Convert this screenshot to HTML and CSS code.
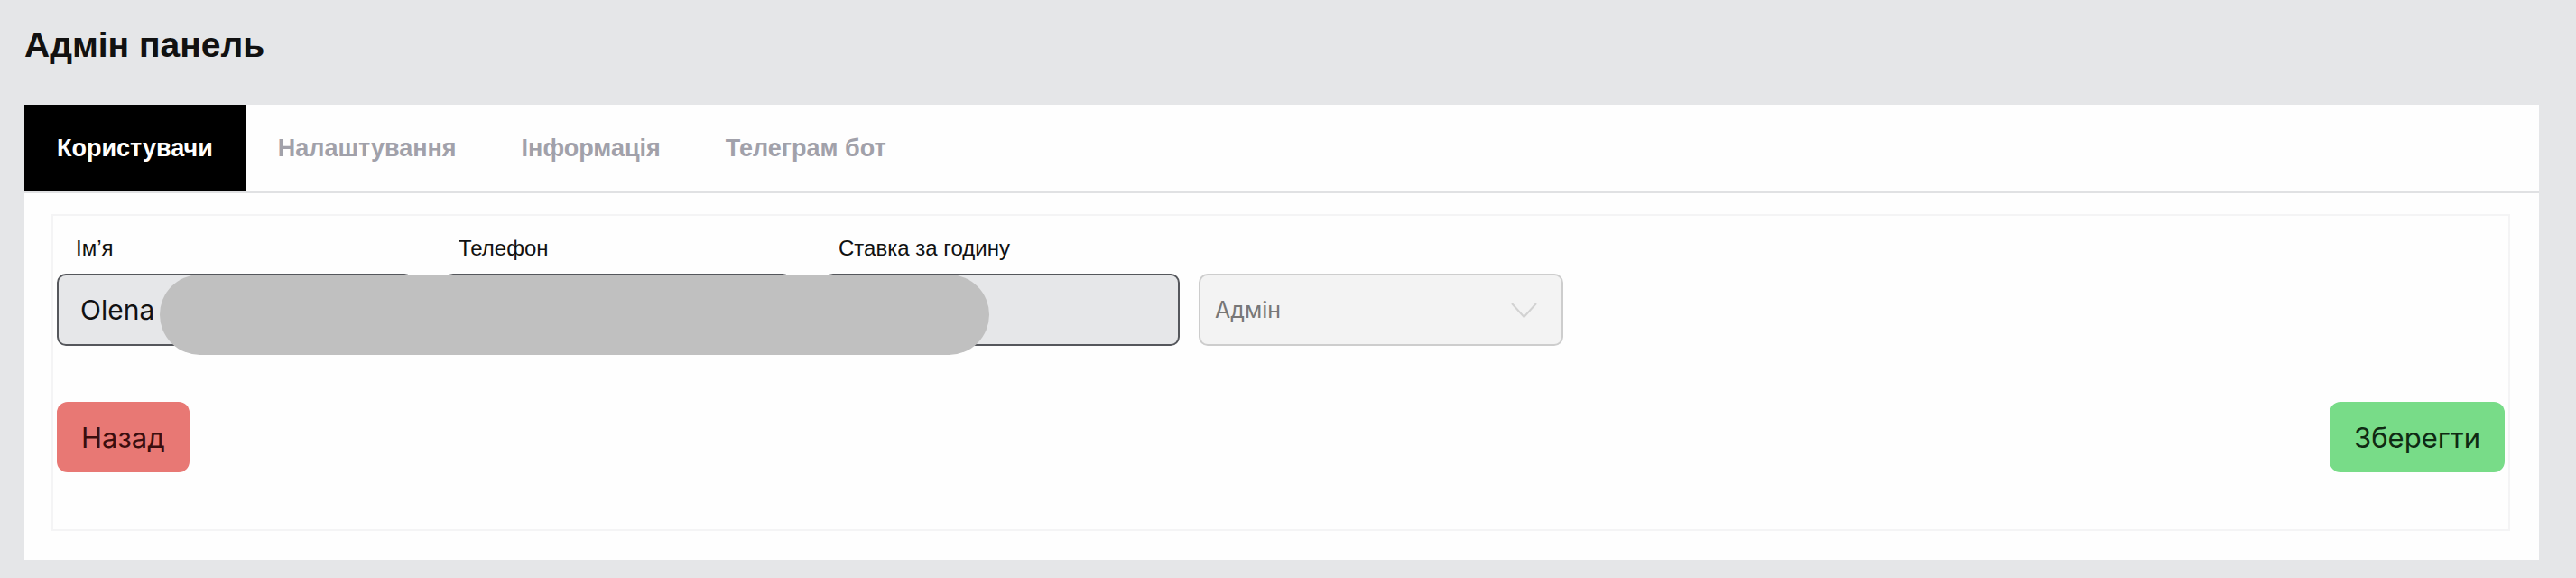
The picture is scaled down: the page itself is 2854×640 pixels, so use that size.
FILE: index.html
```html
<!DOCTYPE html>
<html lang="uk">
<head>
<meta charset="utf-8">
<title>Адмін панель</title>
<link rel="stylesheet" href="styles.css">
</head>
<body>
<div class="page">
  <h1 class="title">Адмін панель</h1>
  <section class="panel">
    <nav class="tabs">
      <div class="tab tab-active">Користувачи</div>
      <div class="tab">Налаштування</div>
      <div class="tab">Інформація</div>
      <div class="tab">Телеграм бот</div>
    </nav>
    <div class="panel-body">
      <form class="card">
        <div class="fields">
          <div class="field field-name">
            <label class="label label-first">Ім’я</label>
            <div class="input">Olena</div>
          </div>
          <div class="field field-phone">
            <label class="label">Телефон</label>
            <div class="input"></div>
          </div>
          <div class="field field-rate">
            <label class="label">Ставка за годину</label>
            <div class="input"></div>
          </div>
          <div class="field field-role">
            <div class="select">
              <span>Адмін</span>
              <svg class="chevron" width="29" height="17" viewBox="0 0 29 17"><polyline points="1,1 14.5,16 28,1" fill="none" stroke="#d2d2d2" stroke-width="2"/></svg>
            </div>
          </div>
        </div>
        <div class="actions">
          <button type="button" class="btn btn-back">Назад</button>
          <button type="button" class="btn btn-save">Зберегти</button>
        </div>
        <div class="redaction"></div>
      </form>
    </div>
  </section>
</div>
</body>
</html>
```
FILE: styles.css
```css
html, body {
  margin: 0;
  padding: 0;
  background: #e5e6e8;
}
.page {
  padding: 27px 41px 20px 27px;
  font-family: "Liberation Sans", Arial, sans-serif;
  color: #111;
}
.title {
  margin: 0 0 43px 0;
  font-size: 39px;
  line-height: 46px;
  font-weight: 700;
  color: #111;
}
.panel {
  background: #fefefe;
}
.tabs {
  display: flex;
  height: 96px;
  border-bottom: 2px solid #e0e1e3;
}
.tab {
  display: flex;
  align-items: center;
  padding: 0 36px;
  font-size: 27px;
  font-weight: 700;
  color: #a1a1aa;
  white-space: nowrap;
}
.tab-active {
  background: #000;
  color: #fff;
}
.panel-body {
  padding: 23px 32px 32px 30px;
}
.card {
  position: relative;
  margin: 0;
  border: 2px solid #f4f4f5;
  padding: 22px 4px 63px 4px;
}
.fields {
  display: flex;
  align-items: flex-end;
}
.field {
  display: flex;
  flex-direction: column;
}
.field-name { width: 395px; }
.field-phone { width: 385px; margin-left: 34px; }
.field-rate { width: 394px; margin-left: 36px; }
.field-role { width: 404px; margin-left: 21px; }
.label {
  display: block;
  font-size: 24px;
  line-height: 28px;
  margin-bottom: 14px;
  padding-left: 16px;
  color: #111;
}
.label-first {
  padding-left: 21px;
}
.input {
  box-sizing: border-box;
  height: 80px;
  border: 2px solid #55575c;
  border-radius: 10px;
  background: #e6e7e9;
  padding: 0 24px;
  display: flex;
  align-items: center;
  font-family: Inter, "Liberation Sans", sans-serif;
  font-size: 30px;
  color: #111;
}
.select {
  box-sizing: border-box;
  height: 80px;
  border: 2px solid #cdcdcd;
  border-radius: 10px;
  background: #f3f3f3;
  padding: 0 27px 0 16px;
  display: flex;
  align-items: center;
  justify-content: space-between;
  font-family: Inter, "Liberation Sans", sans-serif;
  font-size: 25px;
  color: #777;
}
.chevron {
  display: block;
}
.actions {
  display: flex;
  justify-content: space-between;
  margin-top: 62px;
}
.btn {
  height: 78px;
  border: none;
  border-radius: 12px;
  padding: 0 27px;
  font-family: Inter, "Liberation Sans", sans-serif;
  font-size: 31px;
  cursor: pointer;
}
.btn-back {
  background: #e87874;
  color: #3a0e0e;
}
.btn-save {
  background: #78dc88;
  color: #0f2a13;
}
.redaction {
  position: absolute;
  left: 118px;
  top: 65px;
  width: 919px;
  height: 89px;
  border-radius: 45px;
  background: #c0c0c0;
}
```
